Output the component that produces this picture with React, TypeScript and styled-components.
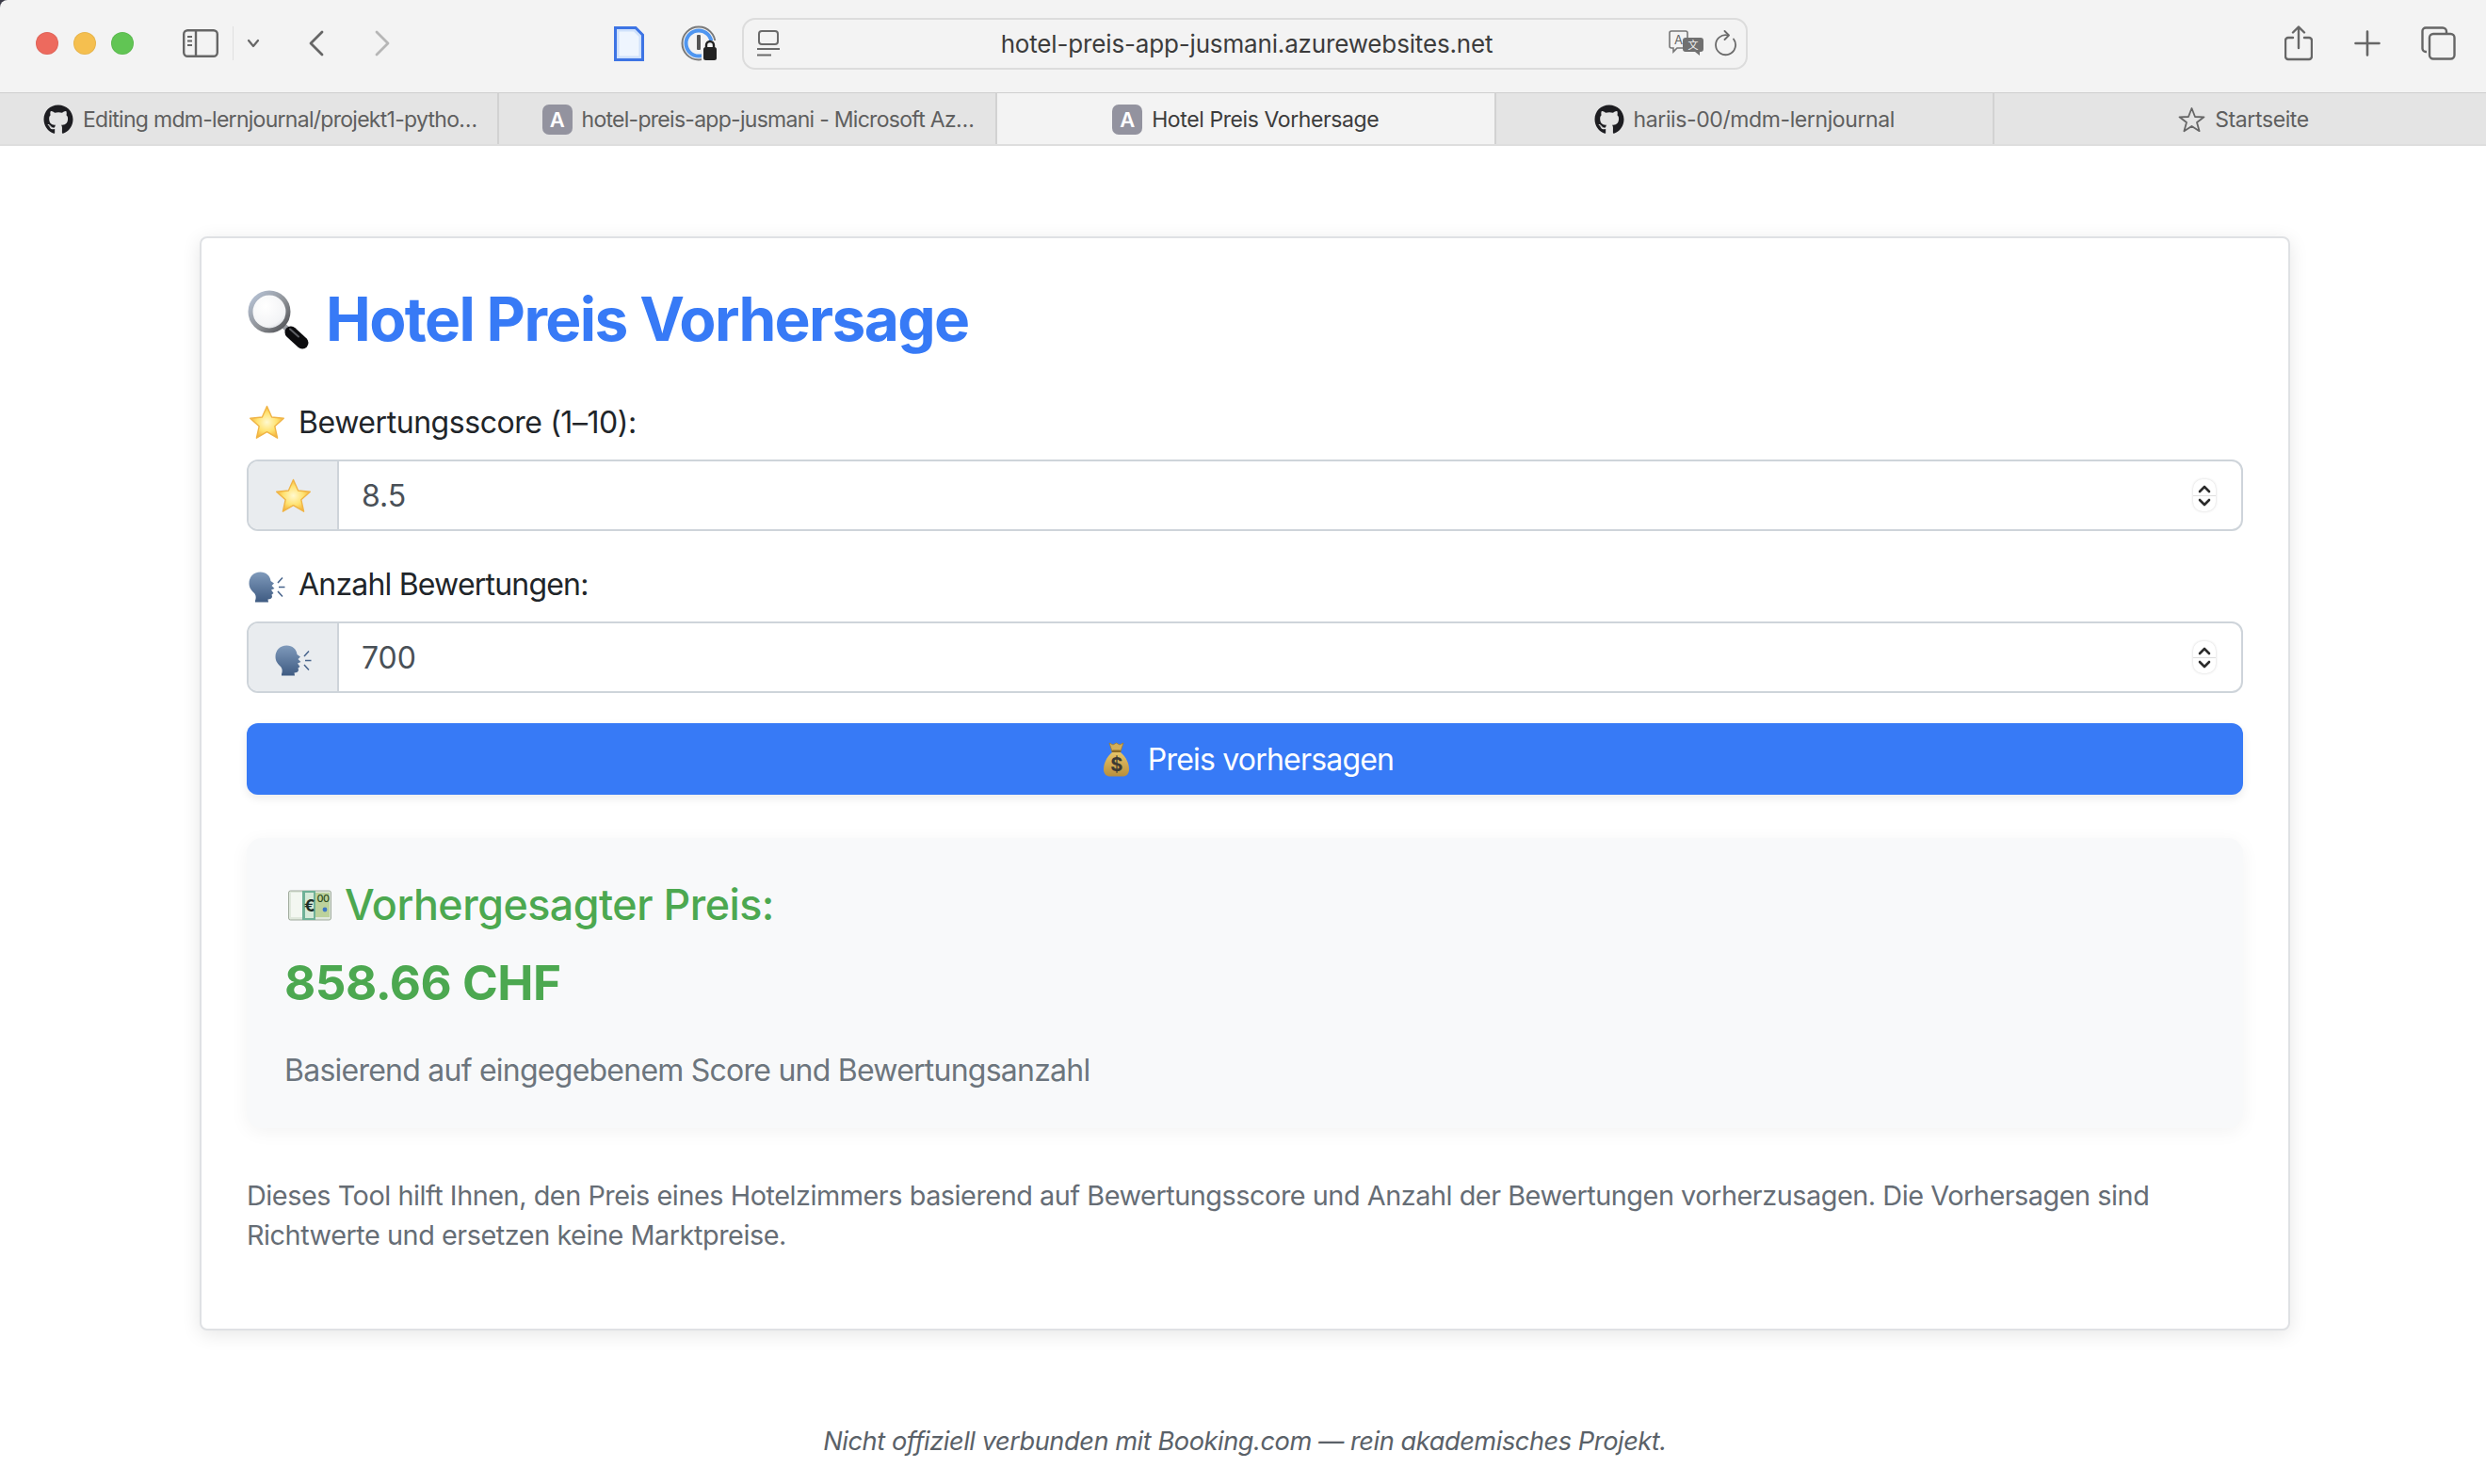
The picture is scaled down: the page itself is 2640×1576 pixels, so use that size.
import styled, { createGlobalStyle } from "styled-components";
import { FaGithub } from "react-icons/fa";

const GlobalStyle = createGlobalStyle`
  html, body {
    margin: 0;
    padding: 0;
    background: #ffffff;
    font-family: Inter, "Liberation Sans", sans-serif;
    overflow: hidden;
  }
  * { box-sizing: border-box; }
`;

//Emoji drawings
const MagnifierEmoji = () => (
  <svg width="66" height="64" viewBox="0 0 66 64">
    <defs>
      <radialGradient id="lens" cx="40%" cy="35%" r="70%">
        <stop offset="0%" stopColor="#ffffff" />
        <stop offset="75%" stopColor="#f3f4f6" />
        <stop offset="100%" stopColor="#cfd3d9" />
      </radialGradient>
      <linearGradient id="rim" x1="0" y1="0" x2="1" y2="1">
        <stop offset="0%" stopColor="#b9c6da" />
        <stop offset="55%" stopColor="#8f9297" />
        <stop offset="100%" stopColor="#4a4c50" />
      </linearGradient>
    </defs>
    <line x1="37" y1="37" x2="46" y2="45" stroke="#9a9da3" strokeWidth="6" />
    <line x1="47" y1="46" x2="59" y2="57" stroke="#0c0c0e" strokeWidth="13" strokeLinecap="round" />
    <line x1="46" y1="42.5" x2="55" y2="50.5" stroke="#5d5f64" strokeWidth="2" strokeLinecap="round" />
    <circle cx="24" cy="24" r="20" fill="url(#lens)" stroke="url(#rim)" strokeWidth="5" />
  </svg>
);

const StarEmoji = () => (
  <svg width="39" height="37" viewBox="0 0 39 37">
    <defs>
      <radialGradient id="star" cx="50%" cy="50%" r="55%">
        <stop offset="0%" stopColor="#fff9cf" />
        <stop offset="55%" stopColor="#ffe270" />
        <stop offset="100%" stopColor="#f2ab34" />
      </radialGradient>
    </defs>
    <path
      d="M19.5 1.5 L24.6 13 L37.3 14.3 L27.8 22.7 L30.6 35.2 L19.5 28.7 L8.4 35.2 L11.2 22.7 L1.7 14.3 L14.4 13 Z"
      fill="url(#star)"
      stroke="#f0b445"
      strokeWidth="1.4"
      strokeLinejoin="round"
    />
  </svg>
);

const HeadEmoji = () => (
  <HeadSvg width="39" height="33" viewBox="0 0 39 33">
    <defs>
      <linearGradient id="head" x1="0" y1="0" x2="0" y2="1">
        <stop offset="0%" stopColor="#7f9abb" />
        <stop offset="100%" stopColor="#3f5b82" />
      </linearGradient>
    </defs>
    <path
      d="M12.5 0.5 C5 0.5 0.5 6 0.5 12.5 C0.5 17.5 3.5 20.5 6.5 23.5 C8 25.5 8 28.5 7 31 L7 32.5 L21 32.5 L20.5 29.5 C23 29.5 25 28.5 25 26.5 L24.5 24.5 L26.5 23 L24 19.5 L27.5 18 L24.5 15 L27 12.5 L23.5 10 C23 4.5 18.5 0.5 12.5 0.5 Z"
      fill="url(#head)"
    />
    <path d="M31 12 L36 6.5 M32 16.5 L38.5 16.5 M31 21 L36 26.5" stroke="#47648c" strokeWidth="1.5" fill="none" />
  </HeadSvg>
);

const BagEmoji = () => (
  <svg width="27" height="37" viewBox="0 0 27 37">
    <defs>
      <linearGradient id="bag" x1="0" y1="0" x2="0" y2="1">
        <stop offset="0%" stopColor="#e6c468" />
        <stop offset="100%" stopColor="#b98f3c" />
      </linearGradient>
    </defs>
    <path d="M6 1 L10 3 L13.5 1 L17 3 L21 1 L18 10 L9 10 Z" fill="#d4ae58" stroke="#a07c2e" strokeWidth="0.8" />
    <rect x="8.5" y="8.5" width="10" height="3" rx="1.5" fill="#8b6a26" />
    <path d="M9 11 L18 11 C24 16 27 23 27 29 C27 34 24 36.5 20 36.5 L7 36.5 C3 36.5 0 34 0 29 C0 23 3 16 9 11 Z" fill="url(#bag)" />
    <text x="13.5" y="31" textAnchor="middle" fontSize="20" fontWeight="700" fontFamily="Inter, sans-serif" fill="#3d3a34">$</text>
  </svg>
);

const BanknoteEmoji = () => (
  <svg width="46" height="33" viewBox="0 0 46 33">
    <rect x="0.5" y="1" width="45" height="31" rx="2" fill="#dfe8dc" stroke="#8e9a8a" strokeWidth="0.8" />
    <rect x="3" y="3" width="12" height="26" fill="#f3f7f1" />
    <rect x="15" y="1" width="14" height="31" fill="#6fb197" />
    <rect x="18" y="3" width="9" height="27" fill="#d6ead9" />
    <rect x="29" y="3" width="15" height="26" fill="#bcd29c" />
    <text x="22.5" y="23" textAnchor="middle" fontSize="17" fontWeight="700" fontFamily="Inter, sans-serif" fill="#1f2d25">€</text>
    <text x="37" y="13" textAnchor="middle" fontSize="11" fontFamily="Inter, sans-serif" fill="#2f4d22">00</text>
    <circle cx="39" cy="21" r="2.4" fill="#3d78c4" />
  </svg>
);

//Browser chrome icons
const SidebarIcon = () => (
  <svg width="38" height="30" viewBox="0 0 38 30" fill="none" stroke="#666" strokeWidth="2.4">
    <rect x="1.2" y="1.2" width="35.6" height="27.6" rx="4" />
    <line x1="14" y1="1.2" x2="14" y2="28.8" />
    <path d="M5 8h5M5 12.5h5M5 17h5" strokeWidth="2" />
  </svg>
);

const ChevronDown = () => (
  <svg width="14" height="10" viewBox="0 0 14 10" fill="none" stroke="#666" strokeWidth="2.2" strokeLinecap="round" strokeLinejoin="round">
    <path d="M2 2 L7 8 L12 2" />
  </svg>
);

const NavArrow = ({ color, flip }: { color: string; flip?: boolean }) => (
  <svg width="16" height="28" viewBox="0 0 16 28" fill="none" stroke={color} strokeWidth="2.8" strokeLinecap="round" strokeLinejoin="round">
    <path d={flip ? "M2 2 L14 14 L2 26" : "M14 2 L2 14 L14 26"} />
  </svg>
);

const FileIcon = () => (
  <svg width="32" height="37" viewBox="0 0 32 37">
    <path d="M1.5 1.5 H23 L30.5 9 V35.5 H1.5 Z" fill="#cfe1fb" stroke="#3d74e4" strokeWidth="3" />
    <path d="M5.5 5.5 H21 L26.5 11 V31.5 H5.5 Z" fill="#eef5fe" />
  </svg>
);

const PasswordIcon = () => (
  <svg width="40" height="38" viewBox="0 0 40 38" fill="none">
    <circle cx="19" cy="19" r="17.5" stroke="#7a7a7a" strokeWidth="2" />
    <circle cx="19" cy="19" r="13.5" stroke="#4f96f0" strokeWidth="4" />
    <rect x="17" y="10" width="4" height="16" rx="1" fill="#555" />
    <rect x="22" y="16" width="18" height="22" fill="#f3f3f3" />
    <path d="M27 24 v-3 a4 4 0 0 1 8 0 v3" stroke="#222" strokeWidth="2.4" />
    <rect x="24" y="23" width="14" height="14" rx="2.5" fill="#222" />
  </svg>
);

const ReaderIcon = () => (
  <svg width="24" height="28" viewBox="0 0 24 28" fill="none" stroke="#6a6a6a" strokeWidth="2">
    <rect x="2" y="1" width="20" height="14" rx="3" />
    <path d="M0 20 H24" />
    <path d="M0 26.5 H15" />
  </svg>
);

const TranslateIcon = () => (
  <svg width="38" height="28" viewBox="0 0 38 28">
    <path d="M3 1 H18 a2 2 0 0 1 2 2 V17 a2 2 0 0 1 -2 2 H9 L5 23 V19 H3 a2 2 0 0 1 -2 -2 V3 a2 2 0 0 1 2 -2 Z" fill="#f3f3f3" stroke="#777" strokeWidth="1.6" />
    <text x="10.5" y="15" textAnchor="middle" fontSize="13" fontFamily="Inter, sans-serif" fill="#666">A</text>
    <path d="M18 8 H34 a3 3 0 0 1 3 3 V20 a3 3 0 0 1 -3 3 H33 V27 L28 23 H18 a3 3 0 0 1 -3 -3 V11 a3 3 0 0 1 3 -3 Z" fill="#707070" />
    <text x="26" y="20" textAnchor="middle" fontSize="11" fontFamily="'Noto Sans CJK SC', sans-serif" fill="#f3f3f3">文</text>
  </svg>
);

const ReloadIcon = () => (
  <svg width="24" height="28" viewBox="0 0 24 28" fill="none" stroke="#6a6a6a" strokeWidth="1.8" strokeLinecap="round" strokeLinejoin="round">
    <path d="M15 5.5 A10.5 10.5 0 1 0 21 9.5" />
    <path d="M11.5 1 L16 5.5 L11.5 10" />
  </svg>
);

const ShareIcon = () => (
  <svg width="30" height="38" viewBox="0 0 30 38" fill="none" stroke="#666" strokeWidth="2.4" strokeLinecap="round" strokeLinejoin="round">
    <path d="M9 13 H4 a3 3 0 0 0 -3 3 V33 a3 3 0 0 0 3 3 H26 a3 3 0 0 0 3 -3 V16 a3 3 0 0 0 -3 -3 H21" />
    <path d="M15 24 V2 M9 7.5 L15 1.5 L21 7.5" />
  </svg>
);

const PlusIcon = () => (
  <svg width="28" height="28" viewBox="0 0 28 28" stroke="#666" strokeWidth="2.6" strokeLinecap="round">
    <path d="M14 1.5 V26.5 M1.5 14 H26.5" />
  </svg>
);

const TabsIcon = () => (
  <svg width="37" height="36" viewBox="0 0 37 36" fill="none" stroke="#666" strokeWidth="2.4">
    <path d="M6 27 H5 a3.5 3.5 0 0 1 -3.5 -3.5 V5 a3.5 3.5 0 0 1 3.5 -3.5 H23 a4 4 0 0 1 4 4 V8" />
    <rect x="9" y="8" width="26.5" height="26.5" rx="4" />
  </svg>
);

const TabStar = () => (
  <svg width="29" height="28" viewBox="0 0 29 28" fill="none" stroke="#666" strokeWidth="1.8" strokeLinejoin="round">
    <path d="M14.5 2 L18 11 L27.5 11.3 L20 17 L22.6 26.2 L14.5 21 L6.4 26.2 L9 17 L1.5 11.3 L11 11 Z" />
  </svg>
);

const Spinner = () => (
  <SpinnerBox>
    <svg width="14" height="9" viewBox="0 0 14 9" fill="none" stroke="#2b2b2b" strokeWidth="2.6" strokeLinecap="round" strokeLinejoin="round">
      <path d="M2 7 L7 2 L12 7" />
    </svg>
    <SpinnerLine />
    <svg width="14" height="9" viewBox="0 0 14 9" fill="none" stroke="#2b2b2b" strokeWidth="2.6" strokeLinecap="round" strokeLinejoin="round">
      <path d="M2 2 L7 7 L12 2" />
    </svg>
  </SpinnerBox>
);

const App = () => {
  return (
    <>
      <GlobalStyle />
      <Window>
        <Toolbar>
          <Lights>
            <Light $color="#ed6a5e" />
            <Light $color="#f5bf4f" />
            <Light $color="#61c554" />
          </Lights>
          <ToolSlot $left={52}>
            <SidebarIcon />
          </ToolSlot>
          <Separator />
          <ToolSlot $left={14}>
            <ChevronDown />
          </ToolSlot>
          <ToolSlot $left={52}>
            <NavArrow color="#666" />
          </ToolSlot>
          <ToolSlot $left={54}>
            <NavArrow color="#b6b6b6" flip />
          </ToolSlot>
          <ToolSlot $left={238}>
            <FileIcon />
          </ToolSlot>
          <ToolSlot $left={39}>
            <PasswordIcon />
          </ToolSlot>
          <UrlBar>
            <UrlSide>
              <ReaderIcon />
            </UrlSide>
            <UrlText>hotel-preis-app-jusmani.azurewebsites.net</UrlText>
            <UrlSide $end>
              <TranslateIcon />
              <ReloadIcon />
            </UrlSide>
          </UrlBar>
          <ToolSlot $left={570}>
            <ShareIcon />
          </ToolSlot>
          <ToolSlot $left={44}>
            <PlusIcon />
          </ToolSlot>
          <ToolSlot $left={43}>
            <TabsIcon />
          </ToolSlot>
        </Toolbar>

        <TabBar>
          <Tab $start>
            <FaGithub size={32} color="#1d1d21" />
            <span>Editing mdm-lernjournal/projekt1-pytho…</span>
          </Tab>
          <Tab $start>
            <LetterIcon>A</LetterIcon>
            <span>hotel-preis-app-jusmani - Microsoft Az…</span>
          </Tab>
          <Tab $active>
            <LetterIcon>A</LetterIcon>
            <span>Hotel Preis Vorhersage</span>
          </Tab>
          <Tab>
            <FaGithub size={32} color="#1d1d21" />
            <span>hariis-00/mdm-lernjournal</span>
          </Tab>
          <Tab>
            <TabStar />
            <span>Startseite</span>
          </Tab>
        </TabBar>
      </Window>

      <Page>
        <Card>
          <Title>
            <MagnifierEmoji />
            Hotel Preis Vorhersage
          </Title>

          <Label $spacing={-0.44}>
            <StarEmoji />
            Bewertungsscore (1–10):
          </Label>
          <InputGroup>
            <Prepend>
              <StarEmoji />
            </Prepend>
            <NumberInput type="text" defaultValue="8.5" readOnly />
            <Spinner />
          </InputGroup>

          <Label $spacing={-0.8}>
            <HeadEmoji />
            Anzahl Bewertungen:
          </Label>
          <InputGroup>
            <Prepend>
              <HeadEmoji />
            </Prepend>
            <NumberInput type="text" defaultValue="700" readOnly />
            <Spinner />
          </InputGroup>

          <SubmitButton type="button">
            <BagEmoji />
            Preis vorhersagen
          </SubmitButton>

          <ResultBox>
            <ResultTitle>
              <BanknoteEmoji />
              Vorhergesagter Preis:
            </ResultTitle>
            <Price>858.66 CHF</Price>
            <ResultNote>Basierend auf eingegebenem Score und Bewertungsanzahl</ResultNote>
          </ResultBox>

          <Info>
            Dieses Tool hilft Ihnen, den Preis eines Hotelzimmers basierend auf Bewertungsscore und Anzahl der
            Bewertungen vorherzusagen. Die Vorhersagen sind Richtwerte und ersetzen keine Marktpreise.
          </Info>
        </Card>
        <Footer>Nicht offiziell verbunden mit Booking.com — rein akademisches Projekt.</Footer>
      </Page>
    </>
  );
};

const HeadSvg = styled.svg`
  margin-top: 6px;
`;

const Window = styled.header`
  background: #3b3b48;
`;

const Toolbar = styled.div`
  height: 98px;
  padding: 0 0 6px 38px;
  display: flex;
  align-items: center;
  background: #f3f3f3;
  border-top-left-radius: 8px;
`;

const Lights = styled.div`
  display: flex;
  gap: 16px;
`;

const Light = styled.span<{ $color: string }>`
  width: 24px;
  height: 24px;
  border-radius: 50%;
  background: ${(p) => p.$color};
  box-shadow: inset 0 0 0 1px rgba(0, 0, 0, 0.06);
`;

const ToolSlot = styled.div<{ $left: number }>`
  margin-left: ${(p) => p.$left}px;
  display: flex;
  align-items: center;
`;

const Separator = styled.div`
  width: 1px;
  height: 36px;
  margin-left: 15px;
  background: #e0e0e0;
`;

const UrlBar = styled.div`
  width: 1068px;
  height: 55px;
  margin-left: 25px;
  padding: 0 10px 0 14px;
  display: grid;
  grid-template-columns: 1fr auto 1fr;
  align-items: center;
  border: 2px solid #dcdcdc;
  border-radius: 14px;
  background: #f3f3f3;
`;

const UrlSide = styled.div<{ $end?: boolean }>`
  display: flex;
  align-items: center;
  justify-content: ${(p) => (p.$end ? "flex-end" : "flex-start")};
  gap: 10px;
`;

const UrlText = styled.span`
  font-size: 26px;
  letter-spacing: -0.16px;
  color: #3c3c3c;
  white-space: nowrap;
`;

const TabBar = styled.nav`
  height: 57px;
  display: grid;
  grid-template-columns: repeat(4, 529.5px) 1fr;
  background: #e4e4e4;
  border-top: 1px solid #cfcfcf;
  border-bottom: 2px solid #dedede;
`;

const Tab = styled.div<{ $active?: boolean; $start?: boolean }>`
  display: flex;
  align-items: center;
  justify-content: ${(p) => (p.$start ? "flex-start" : "center")};
  gap: 10px;
  padding-left: ${(p) => (p.$start ? "46px" : "0")};
  padding-top: 2px;
  font-size: 23px;
  letter-spacing: ${(p) => (p.$start ? "-0.72px" : "-0.4px")};
  white-space: nowrap;
  overflow: hidden;
  color: ${(p) => (p.$active ? "#3c3c3c" : "#5f5f5f")};
  background: ${(p) => (p.$active ? "#f3f3f3" : "transparent")};
  border-right: 2px solid #d2d2d2;

  svg {
    flex: none;
  }

  &:last-child {
    padding-left: 7px;
    border-right: none;
  }
`;

const LetterIcon = styled.span`
  flex: none;
  width: 32px;
  height: 32px;
  display: flex;
  align-items: center;
  justify-content: center;
  border-radius: 7px;
  background: #93939f;
  color: #ffffff;
  font-size: 22px;
  font-weight: 600;
`;

const Page = styled.main`
  padding: 96px 208px 0 212px;
  display: flex;
  flex-direction: column;
`;

const Card = styled.section`
  height: 1162px;
  padding: 48px;
  background: #ffffff;
  border: 2px solid #dfe1e4;
  border-radius: 8px;
  box-shadow: 0 4px 20px rgba(0, 0, 0, 0.1);
`;

const Title = styled.h1`
  margin: -1px 0 47px;
  display: flex;
  align-items: center;
  gap: 18px;
  font-size: 64px;
  line-height: 77px;
  letter-spacing: -1.65px;
  font-weight: 700;
  color: #377af6;
`;

const Label = styled.label<{ $spacing: number }>`
  height: 48px;
  margin-bottom: 16px;
  display: flex;
  align-items: center;
  gap: 14px;
  padding-left: 2px;
  font-size: 32px;
  letter-spacing: ${(p) => p.$spacing}px;
  color: #212529;
`;

const InputGroup = styled.div`
  height: 76px;
  margin-bottom: 32px;
  display: flex;
  align-items: center;
  border: 2px solid #ced4da;
  border-radius: 12px;
  overflow: hidden;
`;

const Prepend = styled.div`
  flex: none;
  width: 96px;
  height: 100%;
  display: flex;
  align-items: center;
  justify-content: center;
  background: #e9ecef;
  border-right: 2px solid #ced4da;
`;

const NumberInput = styled.input`
  flex: 1;
  height: 100%;
  min-width: 0;
  padding: 0 24px;
  border: none;
  outline: none;
  background: #ffffff;
  font-family: inherit;
  font-size: 32px;
  color: #495057;
`;

const SpinnerBox = styled.div`
  flex: none;
  width: 24px;
  height: 34px;
  margin-right: 27px;
  display: flex;
  flex-direction: column;
  align-items: center;
  justify-content: center;
  gap: 2px;
  border-radius: 10px;
  background: #ffffff;
  box-shadow: 0 0 3px rgba(0, 0, 0, 0.18);
`;

const SpinnerLine = styled.span`
  width: 100%;
  height: 1px;
  background: #dddddd;
`;

const SubmitButton = styled.button`
  width: 100%;
  height: 76px;
  padding-left: 14px;
  display: flex;
  align-items: center;
  justify-content: center;
  gap: 20px;
  border: none;
  border-radius: 12px;
  background: #377af6;
  color: #ffffff;
  font-family: inherit;
  font-size: 32px;
  letter-spacing: -0.8px;
  box-shadow: 0 4px 10px rgba(0, 0, 0, 0.08);
`;

const ResultBox = styled.div`
  margin-top: 46px;
  height: 308px;
  padding: 44px 40px 0;
  background: #f8f9fa;
  border-radius: 16px;
  box-shadow: 0 4px 20px rgba(0, 0, 0, 0.05);
`;

const ResultTitle = styled.h4`
  margin: 0;
  padding-left: 4px;
  display: flex;
  align-items: center;
  gap: 14px;
  font-size: 44.8px;
  line-height: 54px;
  letter-spacing: -0.5px;
  font-weight: 500;
  color: #4ca850;
`;

const Price = styled.div`
  margin-top: 25px;
  font-size: 51.2px;
  line-height: 61px;
  letter-spacing: -0.5px;
  font-weight: 700;
  color: #4ca850;
`;

const ResultNote = styled.p`
  margin: 39px 0 0;
  font-size: 32px;
  line-height: 48px;
  letter-spacing: -0.76px;
  color: #6c757d;
`;

const Info = styled.p`
  margin: 51px 0 0;
  font-size: 28.8px;
  line-height: 42px;
  letter-spacing: -0.45px;
  color: #666d75;
`;

const Footer = styled.footer`
  margin-top: 100px;
  text-align: center;
  font-size: 27.2px;
  line-height: 36px;
  letter-spacing: -0.44px;
  font-style: italic;
  color: #5a6168;
`;

export default App;
